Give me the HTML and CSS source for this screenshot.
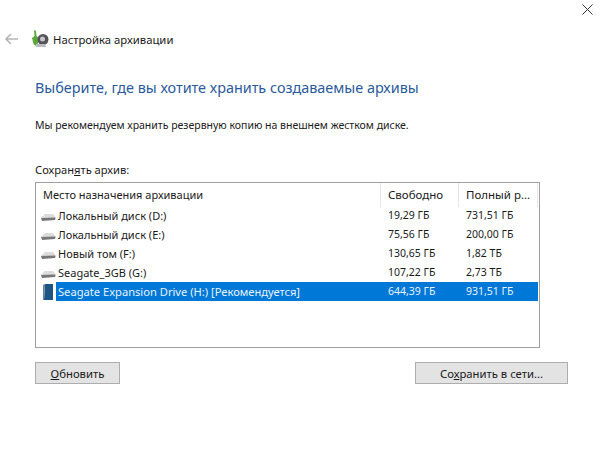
FILE: index.html
```html
<!DOCTYPE html>
<html lang="ru">
<head>
  <meta charset="UTF-8" />
  <title>Настройка архивации</title>
  <link rel="stylesheet" href="styles.css">
</head>
<body>

<div class="close-row">
  <svg class="close-icon" width="11" height="11" viewBox="0 0 11 11"><path d="M.5.5l10 10M10.5.5l-10 10" stroke="#333" stroke-width="1" fill="none"/></svg>
</div>

<div class="title-row">
  <svg class="back-icon" width="16" height="12" viewBox="0 0 16 12"><path d="M14 6H2M7 1L2 6l5 5" stroke="#b5b5b5" stroke-width="1.6" fill="none"/></svg>
  <svg class="app-icon" width="17" height="18" viewBox="0 0 17 18">
    <path d="M2 0l2 1 .5 5 2.500 2-1 5-2 3-2.500-2L0 8l2.500-2z" fill="#5da83a"/>
    <circle cx="11" cy="9.500" r="5.500" fill="#55525a"/>
    <circle cx="10.500" cy="9" r="2.500" fill="#c9c4c8"/>
    <path d="M4 14h9l1 3H4z" fill="#b9bcc0"/>
  </svg>
  <span class="title">Настройка архивации</span>
</div>

<h1 class="heading">Выберите, где вы хотите хранить создаваемые архивы</h1>
<p class="note">Мы рекомендуем хранить резервную копию на внешнем жестком диске.</p>

<div class="list-label">Сохран<u>я</u>ть архив:</div>

<div class="list">
  <div class="row head">
    <div class="cell name">Место назначения архивации</div>
    <div class="cell free">Свободно</div>
    <div class="cell total">Полный р...</div>
  </div>
  <div class="row">
    <div class="cell name"><svg class="disk" width="15" height="7" viewBox="0 0 15 7"><path d="M0 4l4-4h8l3 4-1 1H1z" fill="#dcdcdc"/><path d="M0 4l14-.5.500.5L14 6 1 7z" fill="#777"/></svg><span class="label">Локальный диск (D:)</span></div>
    <div class="cell free">19,29 ГБ</div>
    <div class="cell total">731,51 ГБ</div>
  </div>
  <div class="row">
    <div class="cell name"><svg class="disk" width="15" height="7" viewBox="0 0 15 7"><path d="M0 4l4-4h8l3 4-1 1H1z" fill="#dcdcdc"/><path d="M0 4l14-.5.500.5L14 6 1 7z" fill="#777"/></svg><span class="label">Локальный диск (E:)</span></div>
    <div class="cell free">75,56 ГБ</div>
    <div class="cell total">200,00 ГБ</div>
  </div>
  <div class="row">
    <div class="cell name"><svg class="disk" width="15" height="7" viewBox="0 0 15 7"><path d="M0 4l4-4h8l3 4-1 1H1z" fill="#dcdcdc"/><path d="M0 4l14-.5.500.5L14 6 1 7z" fill="#777"/></svg><span class="label">Новый том (F:)</span></div>
    <div class="cell free">130,65 ГБ</div>
    <div class="cell total">1,82 ТБ</div>
  </div>
  <div class="row">
    <div class="cell name"><svg class="disk" width="15" height="7" viewBox="0 0 15 7"><path d="M0 4l4-4h8l3 4-1 1H1z" fill="#dcdcdc"/><path d="M0 4l14-.5.500.5L14 6 1 7z" fill="#777"/></svg><span class="label">Seagate_3GB (G:)</span></div>
    <div class="cell free">107,22 ГБ</div>
    <div class="cell total">2,73 ТБ</div>
  </div>
  <div class="row selected">
    <div class="cell name"><svg class="drive" width="10" height="16" viewBox="0 0 10 16"><path d="M2 0h8v16H1z" fill="#1f5585"/><path d="M0 1l2-1-1 16H0z" fill="#6c8296"/></svg><span class="label">Seagate Expansion Drive (H:) [Рекомендуется]</span></div>
    <div class="cell free">644,39 ГБ</div>
    <div class="cell total">931,51 ГБ</div>
  </div>
</div>

<div class="buttons">
  <button class="btn refresh"><u>О</u>бновить</button>
  <button class="btn network">Со<u>х</u>ранить в сети...</button>
</div>

</body>
</html>
```

FILE: styles.css
```css
body {
  margin: 0;
  font-family: "Noto Sans", "Open Sans", sans-serif;
  font-size: 11px;
  color: #1a1a1a;
  background: #fff;
  width: 600px;
  height: 459px;
  overflow: hidden;
}
.close-row {
  display: flex;
  justify-content: flex-end;
  padding: 2px 8px 0 0;
  height: 22px;
}
.close-icon {
  margin: 2px -1px 0 0;
}
.title-row {
  display: flex;
  align-items: center;
  height: 30px;
  padding-left: 4px;
}
.back-icon {
  margin-right: 12px;
}
.app-icon {
  margin-right: 4px;
}
.title {
  font-size: 11.3px;
}
.heading {
  margin: 23px 0 0 35px;
  font-size: 14.4px;
  font-weight: 400;
  line-height: 22px;
  color: #2a5a9b;
}
.note {
  margin: 18px 0 0 35px;
  font-size: 10.5px;
  line-height: 16px;
}
.list-label {
  margin: 29px 0 0 35px;
  font-size: 11.15px;
  line-height: 16px;
}
.list {
  margin: 4px 0 0 35px;
  width: 503px;
  height: 164px;
  border: 1px solid #a0a0a0;
}
.row {
  display: grid;
  grid-template-columns: 345px 78px 79px;
  width: 502px;
  height: 19px;
  line-height: 19px;
}
.row.head {
  height: 23px;
  line-height: 24px;
}
.head .cell {
  border-right: 1px solid #e5e5e5;
}
.head .free,
.head .total {
  font-size: 11.5px;
}
.cell {
  padding-left: 7px;
  white-space: nowrap;
}
.free,
.total {
  font-size: 10.5px;
}
.cell.name {
  display: flex;
  align-items: center;
  padding-left: 0;
}
.head .cell.name {
  padding-left: 7px;
}
.disk {
  margin: 3px 0 0 5px;
  flex: none;
}
.drive {
  margin: 0 3px 0 7px;
  flex: none;
}
.label {
  padding: 0 2px;
}
.selected .label {
  font-size: 11.15px;
}
.selected {
  background: linear-gradient(to right, #fff 20px, #0078d7 20px);
  color: #e8f3fc;
}
.buttons {
  display: flex;
  justify-content: space-between;
  width: 533px;
  margin: 14px 0 0 35px;
}
.btn {
  font-family: inherit;
  font-size: 11.3px;
  color: #1a1a1a;
  height: 22px;
  padding: 0;
  background: #e3e3e3;
  border: 1px solid #adadad;
}
.refresh {
  width: 85px;
}
.network {
  width: 153px;
}
```
